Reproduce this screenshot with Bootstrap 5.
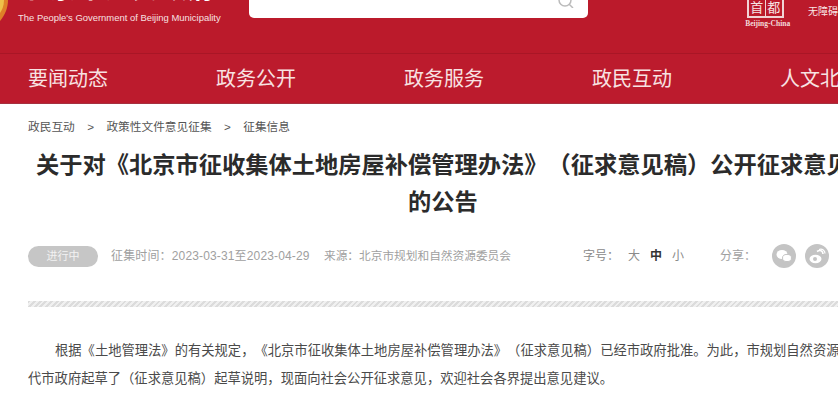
<!DOCTYPE html>
<html lang="zh-CN">
<head>
  <meta charset="UTF-8" />
  <meta name="viewport" content="width=device-width, initial-scale=1.0" />
  <title>征集信息</title>
  <link href="https://cdn.jsdelivr.net/npm/bootstrap@5.3.3/dist/css/bootstrap.min.css" rel="stylesheet">
  <style>
    body {
      width: 838px;
      height: 400px;
      overflow: hidden;
      font-family: "Liberation Sans", "Noto Sans CJK SC", sans-serif;
      background: #fff;
      text-spacing-trim: space-all;
    }
    .page-wrap { width: 1000px; }
    .site-head {
      height: 53px;
      width: 838px;
      background: #bb1a2b;
      overflow: hidden;
    }
    .emblem { width: 10px; height: 24px; flex: none; }
    .brand {
      width: 233px;
      height: 53px;
      padding: 0 0 29px 8px;
      color: #f7e0e1;
      flex: none;
    }
    .brand-name { font-size: 27px; line-height: 30px; font-weight: 700; color: #fff; white-space: nowrap; letter-spacing: .6px; margin-left: 4px; }
    .brand-en { font-size: 9.45px; line-height: 13px; white-space: nowrap; margin-top: 7px; }
    .search-box {
      width: 340px;
      height: 18px;
      margin-left: 6px;
      background: #fff;
      border-radius: 0 0 5px 5px;
      padding-right: 14px;
    }
    .capital-logo { margin-left: 157px; width: 46px; color: #f4dada; }
    .capital-box {
      width: 37px;
      height: 18px;
      margin-left: 2px;
      border: 2px solid #f1d3d5;
      border-top: 0;
    }
    .capital-box span {
      width: 50%;
      font-size: 13px;
      line-height: 15px;
      text-align: center;
      color: #f7e3e3;
    }
    .capital-box .cell-split { border-right: 1px solid #f1d3d5; }
    .capital-en { font-size: 7.5px; line-height: 8px; font-weight: 700; white-space: nowrap; font-family: "Liberation Serif", serif; margin-top: 2px; }
    .access-link { margin-left: 17px; margin-top: 5px; font-size: 10px; line-height: 14px; color: #f9e6e6; white-space: nowrap; }
    .main-nav {
      height: 51px;
      background: #bc1b2d;
      border-top: 1px solid #a91626;
      border-bottom: 1px solid #a5303f;
      padding-left: 28px;
    }
    .main-nav a {
      display: block;
      width: 188px;
      flex: none;
      font-size: 20px;
      line-height: 50px;
      color: #f8e2e2;
      text-decoration: none;
    }
    .crumbs {
      padding: 15px 0 0 28px;
      font-size: 11.7px;
      line-height: 16px;
      color: #555;
      gap: 12.4px;
    }
    .doc-title {
      width: 830px;
      margin: 12px 0 0 28px;
      font-size: 23.25px;
      line-height: 37px;
      font-weight: 700;
      color: #2b2b2b;
      text-align: center;
    }
    .meta-row {
      width: 838px;
      height: 24px;
      margin-top: 23px;
      padding-left: 28px;
      font-size: 12px;
      color: #a0a0a0;
      white-space: nowrap;
    }
    .state-pill {
      width: 70px;
      height: 21px;
      line-height: 21px;
      text-align: center;
      border-radius: 11px;
      background: #c6c6c6;
      color: #f2f2f2;
      font-size: 11px;
      margin-right: 13px;
    }
    .time-text { width: 199px; letter-spacing: .15px; }
    .source-text { margin-left: 14px; width: 187px; font-size: 11.7px; }
    .size-opts { margin-left: 72px; gap: 10px; color: #8a8a8a; }
    .size-label { width: 45px; margin-right: -10px; }
    .size-on { color: #333; font-weight: 700; }
    .share-label { margin-left: 36px; width: 52px; flex: none; }
    .share-dot { width: 24px; height: 24px; flex: none; margin-right: 9px; }
    .dot-rule {
      width: 810px;
      height: 6px;
      margin: 33px 0 0 28px;
      background: repeating-linear-gradient(135deg, #dcdcdc 0 2px, #f0f0f0 2px 4px);
    }
    .doc-body {
      width: 1000px;
      margin: 30px 0 0 28px;
      font-size: 13.3px;
      line-height: 28px;
      color: #4a4a4a;
    }
    .doc-body p { margin: 0; white-space: nowrap; }
    .doc-body .first-line { padding-left: 27px; }
  </style>
</head>
<body>
  <div class="page-wrap">
    <header class="site-head d-flex">
      <svg class="emblem" viewBox="0 0 10 24">
        <path d="M0 0H8C8 8 5 15 0 21Z" fill="#df7f28"/>
        <path d="M0 0H4C4 6 2 10 0 13Z" fill="#efc04a"/>
      </svg>
      <div class="brand d-flex flex-column justify-content-end">
        <div class="brand-name">北京市人民政府</div>
        <div class="brand-en">The People's Government of Beijing Municipality</div>
      </div>
      <div class="search-box d-flex justify-content-end align-items-start flex-none">
        <svg width="16" height="8" viewBox="0 0 16 8" fill="none" stroke="#bbb" stroke-width="1.5">
          <circle cx="7" cy="0" r="6"/>
          <path d="M11 4l4 4"/>
        </svg>
      </div>
      <div class="capital-logo flex-none">
        <div class="capital-box d-flex">
          <span class="cell-split">首</span><span>都</span>
        </div>
        <div class="capital-en">Beijing-China</div>
      </div>
      <div class="access-link">无障碍</div>
    </header>

    <nav class="main-nav d-flex">
      <a href="#">要闻动态</a>
      <a href="#">政务公开</a>
      <a href="#">政务服务</a>
      <a href="#">政民互动</a>
      <a href="#">人文北京</a>
    </nav>

    <div class="crumbs d-flex">
      <span>政民互动</span><span>&gt;</span>
      <span>政策性文件意见征集</span><span>&gt;</span>
      <span>征集信息</span>
    </div>

    <h1 class="doc-title">关于对《北京市征收集体土地房屋补偿管理办法》（征求意见稿）公开征求意见<br>的公告</h1>

    <div class="meta-row d-flex align-items-center">
      <span class="state-pill">进行中</span>
      <span class="time-text">征集时间：2023-03-31至2023-04-29</span>
      <span class="source-text">来源：北京市规划和自然资源委员会</span>
      <span class="size-opts d-flex">
        <span class="size-label">字号：</span>
        <span>大</span><span class="size-on">中</span><span>小</span>
      </span>
      <span class="share-label">分享：</span>
      <svg class="share-dot" viewBox="0 0 24 24">
        <circle cx="12" cy="12" r="12" fill="#c4c4c4"/>
        <ellipse cx="10" cy="10.5" rx="5.5" ry="4.5" fill="#fff"/>
        <ellipse cx="15" cy="14" rx="4.5" ry="3.6" fill="#fff" stroke="#c4c4c4"/>
      </svg>
      <svg class="share-dot" viewBox="0 0 24 24">
        <circle cx="12" cy="12" r="12" fill="#c4c4c4"/>
        <ellipse cx="10.5" cy="15" rx="6" ry="4.2" fill="#fff"/>
        <circle cx="10" cy="15" r="2" fill="#c4c4c4"/>
        <path d="M12 7.5c3-2 6-1 6 2.5" fill="none" stroke="#fff" stroke-width="1.6"/>
        <path d="M14 5.5c3.5-1 6 1 6 4" fill="none" stroke="#fff" stroke-width="1.2"/>
      </svg>
    </div>

    <div class="dot-rule"></div>

    <div class="doc-body">
      <p class="first-line">根据《土地管理法》的有关规定，《北京市征收集体土地房屋补偿管理办法》（征求意见稿）已经市政府批准。为此，市规划自然资源委员会</p>
      <p>代市政府起草了（征求意见稿）起草说明，现面向社会公开征求意见，欢迎社会各界提出意见建议。</p>
    </div>
  </div>
  <script src="https://cdn.jsdelivr.net/npm/bootstrap@5.3.3/dist/js/bootstrap.bundle.min.js"></script>
</body>
</html>
